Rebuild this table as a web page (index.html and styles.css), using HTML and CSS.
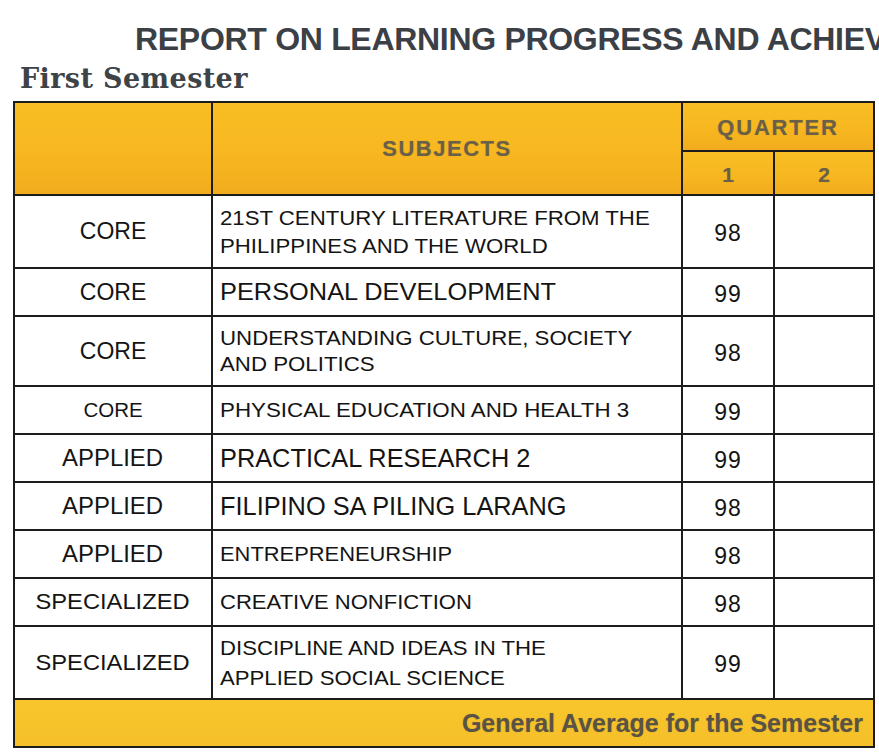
FILE: index.html
```html
<!DOCTYPE html>
<html>
<head>
<meta charset="utf-8">
<link rel="stylesheet" href="styles.css">
</head>
<body>
<div class="page">
  <h1 class="title">REPORT ON LEARNING PROGRESS AND ACHIEVEMENT</h1>
  <h2 class="sem">First Semester</h2>
  <table class="grades">
    <colgroup>
      <col class="c-type"><col class="c-subj"><col class="c-q1"><col class="c-q2">
    </colgroup>
    <thead>
      <tr class="h1">
        <th rowspan="2" class="hd"></th>
        <th rowspan="2" class="hd subj-h">SUBJECTS</th>
        <th colspan="2" class="hd q-h">QUARTER</th>
      </tr>
      <tr class="h2">
        <th class="hd qn">1</th>
        <th class="hd qn">2</th>
      </tr>
    </thead>
    <tbody>
      <tr class="r-tall"><td class="type"><span>CORE</span></td><td class="subj s-lit"><span>21ST CENTURY LITERATURE FROM THE<br>PHILIPPINES AND THE WORLD</span></td><td class="gr">98</td><td></td></tr>
      <tr class="r-std"><td class="type"><span>CORE</span></td><td class="subj s-pd"><span>PERSONAL DEVELOPMENT</span></td><td class="gr">99</td><td></td></tr>
      <tr class="r-mid"><td class="type"><span>CORE</span></td><td class="subj s-ucsp"><span>UNDERSTANDING CULTURE, SOCIETY<br>AND POLITICS</span></td><td class="gr">98</td><td></td></tr>
      <tr class="r-std"><td class="type small"><span>CORE</span></td><td class="subj s-pe"><span>PHYSICAL EDUCATION AND HEALTH 3</span></td><td class="gr">99</td><td></td></tr>
      <tr class="r-std"><td class="type wide"><span>APPLIED</span></td><td class="subj s-big"><span>PRACTICAL RESEARCH 2</span></td><td class="gr">99</td><td></td></tr>
      <tr class="r-std"><td class="type wide"><span>APPLIED</span></td><td class="subj s-big"><span>FILIPINO SA PILING LARANG</span></td><td class="gr">98</td><td></td></tr>
      <tr class="r-std"><td class="type wide"><span>APPLIED</span></td><td class="subj s-ent"><span>ENTREPRENEURSHIP</span></td><td class="gr">98</td><td></td></tr>
      <tr class="r-std"><td class="type spec"><span>SPECIALIZED</span></td><td class="subj s-cnf"><span>CREATIVE NONFICTION</span></td><td class="gr">98</td><td></td></tr>
      <tr class="r-tall"><td class="type spec"><span>SPECIALIZED</span></td><td class="subj s-dia"><span>DISCIPLINE AND IDEAS IN THE<br>APPLIED SOCIAL SCIENCE</span></td><td class="gr">99</td><td></td></tr>
    </tbody>
    <tfoot>
      <tr class="foot"><td colspan="4" class="avg">General Average for the Semester</td></tr>
    </tfoot>
  </table>
</div>
</body>
</html>
```

FILE: styles.css
```css
html, body {
  margin: 0;
  padding: 0;
  background: #ffffff;
}
.page {
  width: 879px;
  height: 755px;
  overflow: hidden;
  font-family: "Liberation Sans", Arial, sans-serif;
  color: #141414;
}
.title {
  margin: 0;
  padding: 20px 0 0 135px;
  height: 38px;
  font-size: 32px;
  line-height: 38px;
  font-weight: bold;
  color: #3b4046;
  white-space: nowrap;
  letter-spacing: -0.3px;
}
.sem {
  margin: 0;
  padding: 3px 0 0 20px;
  height: 36px;
  font-family: "DejaVu Serif", "Liberation Serif", serif;
  font-size: 27px;
  line-height: 36px;
  font-weight: bold;
  color: #3e4347;
  letter-spacing: 0.4px;
}
.grades {
  margin: 4px 0 0 13px;
  border-collapse: collapse;
  table-layout: fixed;
  width: 860px;
}
.c-type { width: 198px; }
.c-subj { width: 470px; }
.c-q1 { width: 92px; }
.c-q2 { width: 100px; }
.grades th,
.grades td {
  border: 2px solid #1c1c1c;
  padding: 0;
}
.grades .hd {
  background: linear-gradient(180deg, #f9be24 0%, #f7b720 55%, #f2ac1e 100%);
  color: #6a6048;
  font-weight: bold;
  font-size: 22px;
  text-shadow: 0 0 1px rgba(90, 80, 60, 0.35);
}
.h1 { height: 49px; }
.h2 { height: 44px; }
.grades .subj-h {
  letter-spacing: 1.5px;
}
.grades .q-h {
  letter-spacing: 1.8px;
  padding-top: 2px;
}
.grades .qn {
  font-size: 21px;
  padding-top: 4px;
}
.r-tall { height: 73px; }
.r-std { height: 48px; }
.r-mid { height: 70px; }
.grades td span {
  display: inline-block;
  white-space: nowrap;
}
.grades .type {
  text-align: center;
  font-size: 23px;
}
.grades .type span {
  transform-origin: 50% 50%;
}
.grades .type.small { font-size: 20.5px; }
.grades .type.wide span { transform: scaleX(1.04); }
.grades .type.spec { font-size: 22px; }
.grades .type.spec span { transform: scaleX(1.077); }
.grades .subj {
  padding-left: 7px;
}
.grades .subj span {
  transform-origin: 0 50%;
}
.grades .s-lit { font-size: 20px; line-height: 28px; }
.grades .s-lit span { transform: scaleX(1.11); }
.grades .s-pd { font-size: 24px; }
.grades .s-pd span { transform: scaleX(1.057); }
.grades .s-ucsp { font-size: 21px; line-height: 26px; }
.grades .s-ucsp span { transform: scaleX(1.06); }
.grades .s-pe { font-size: 20px; }
.grades .s-pe span { transform: scaleX(1.117); }
.grades .s-big { font-size: 25px; }
.grades .s-big span { transform: scaleX(1.014); }
.grades .s-ent { font-size: 20px; }
.grades .s-ent span { transform: scaleX(1.094); }
.grades .s-cnf { font-size: 21px; }
.grades .s-cnf span { transform: scaleX(1.05); }
.grades .s-dia { font-size: 21px; line-height: 30px; }
.grades .s-dia span { transform: scaleX(1.055); }
.grades .gr {
  text-align: center;
  font-size: 23px;
  letter-spacing: 1px;
  padding-top: 4px;
}
.foot { height: 48px; }
.grades .avg {
  background: linear-gradient(180deg, #f8c62c 0%, #f5c02a 100%);
  text-align: right;
  padding-right: 10px;
  font-size: 25px;
  font-weight: bold;
  color: #5a5345;
  text-shadow: 0 0 1px rgba(80, 70, 50, 0.35);
}
```
